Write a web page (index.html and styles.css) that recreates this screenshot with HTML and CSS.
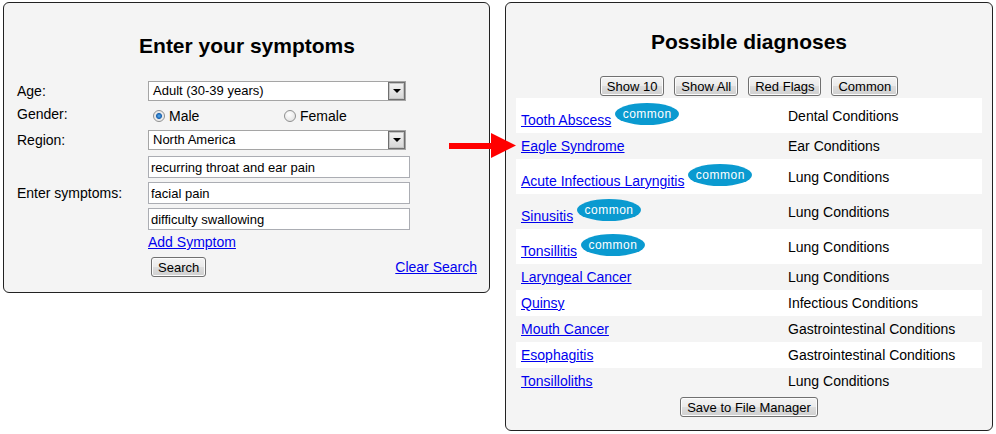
FILE: index.html
```html
<!DOCTYPE html>
<html lang="en">
<head>
    <meta charset="UTF-8">
    <title>Symptom Checker</title>
    <link rel="stylesheet" href="styles.css">
</head>
<body>

    <div class="page">

        <div class="panel symptoms">
            <h2>Enter your symptoms</h2>

            <div class="row row-age">
                <label>Age:</label>
                <div class="select"><span>Adult (30-39 years)</span><span class="drop"></span></div>
            </div>

            <div class="row row-gender">
                <label>Gender:</label>
                <div class="radios">
                    <span class="choice"><span class="radio checked"></span>Male</span>
                    <span class="choice"><span class="radio"></span>Female</span>
                </div>
            </div>

            <div class="row row-region">
                <label>Region:</label>
                <div class="select"><span>North America</span><span class="drop"></span></div>
            </div>

            <div class="row row-symptoms">
                <label>Enter symptoms:</label>
                <div class="inputs">
                    <input type="text" value="recurring throat and ear pain">
                    <input type="text" value="facial pain">
                    <input type="text" value="difficulty swallowing">
                </div>
            </div>

            <div class="row row-add">
                <label></label>
                <a href="#">Add Symptom</a>
            </div>

            <div class="row row-search">
                <label></label>
                <div class="search-line">
                    <button class="btn">Search</button>
                    <a href="#">Clear Search</a>
                </div>
            </div>
        </div>

        <div class="panel diagnoses">
            <h2>Possible diagnoses</h2>

            <div class="toolbar">
                <button class="btn">Show 10</button>
                <button class="btn">Show All</button>
                <button class="btn">Red Flags</button>
                <button class="btn">Common</button>
            </div>

            <table class="results">
                <tr class="lit">
                    <td class="name"><a href="#">Tooth Abscess</a> <span class="badge">common</span></td>
                    <td>Dental Conditions</td>
                </tr>
                <tr>
                    <td class="name"><a href="#">Eagle Syndrome</a></td>
                    <td>Ear Conditions</td>
                </tr>
                <tr class="lit">
                    <td class="name"><a href="#">Acute Infectious Laryngitis</a> <span class="badge">common</span></td>
                    <td>Lung Conditions</td>
                </tr>
                <tr>
                    <td class="name"><a href="#">Sinusitis</a> <span class="badge">common</span></td>
                    <td>Lung Conditions</td>
                </tr>
                <tr class="lit">
                    <td class="name"><a href="#">Tonsillitis</a> <span class="badge">common</span></td>
                    <td>Lung Conditions</td>
                </tr>
                <tr>
                    <td class="name"><a href="#">Laryngeal Cancer</a></td>
                    <td>Lung Conditions</td>
                </tr>
                <tr class="lit">
                    <td class="name"><a href="#">Quinsy</a></td>
                    <td>Infectious Conditions</td>
                </tr>
                <tr>
                    <td class="name"><a href="#">Mouth Cancer</a></td>
                    <td>Gastrointestinal Conditions</td>
                </tr>
                <tr class="lit">
                    <td class="name"><a href="#">Esophagitis</a></td>
                    <td>Gastrointestinal Conditions</td>
                </tr>
                <tr>
                    <td class="name"><a href="#">Tonsilloliths</a></td>
                    <td>Lung Conditions</td>
                </tr>
            </table>

            <div class="save">
                <button class="btn">Save to File Manager</button>
            </div>
        </div>

        <!-- red pointer over the gap between the panels -->
        <svg class="arrow" width="70" height="28" viewBox="0 0 70 28">
            <rect x="1" y="11" width="44" height="6" fill="#ff0000"/>
            <polygon points="43,1 68,13.5 43,26" fill="#ff0000"/>
        </svg>

    </div>

</body>
</html>
```

FILE: styles.css
```css
* {
    box-sizing: border-box;
}

body {
    font-family: "Liberation Sans", Arial, sans-serif;
    font-size: 14px;
    color: black;
    background: white;
    margin: 0;
    padding: 0;
}

a {
    color: #0000ee;
}

.page {
    position: relative;
    display: flex;
    align-items: flex-start;
    gap: 15px;
    padding: 2px 0 0 3px;
}

.panel {
    background: #f4f4f4;
    border: 1px solid #222;
    border-radius: 6px;
}

.panel h2 {
    margin: 0;
    font-size: 21px;
    line-height: 24px;
    text-align: center;
}

/* left panel */

.symptoms {
    width: 487px;
    height: 291px;
    padding: 31px 12px 0 13px;
}

.row {
    display: flex;
    align-items: center;
    line-height: 16px;
}

.row label {
    width: 131px;
    flex-shrink: 0;
}

.row-age {
    margin-top: 23px;
}

.row-gender {
    margin-top: 6px;
    height: 17px;
}

.row-gender label {
    align-self: flex-start;
    margin-top: -1px;
}

.row-region,
.row-symptoms {
    margin-top: 6px;
}

.row-add {
    margin-top: 4px;
}

.row-search {
    margin-top: 7px;
}

.select {
    width: 258px;
    height: 20px;
    border: 1px solid #a5a5a5;
    background: white;
    display: flex;
    align-items: center;
    padding-left: 4px;
    font-size: 13px;
}

.drop {
    margin-left: auto;
    width: 17px;
    height: 18px;
    border: 1px solid #6f6f6f;
    box-shadow: inset 0 0 0 1px #c4c4c4;
    background: linear-gradient(#f4f4f4, #d6d6d6);
    display: flex;
    align-items: center;
    justify-content: center;
}

.drop::after {
    content: "";
    border-left: 4px solid transparent;
    border-right: 4px solid transparent;
    border-top: 4px solid black;
}

.radios {
    display: grid;
    grid-template-columns: 131px 131px;
}

.choice {
    display: flex;
    align-items: center;
    gap: 4px;
    padding-left: 5px;
}

.radio {
    width: 12px;
    height: 12px;
    border-radius: 50%;
    border: 1px solid #8e8f8f;
    background: radial-gradient(circle at 40% 35%, #ffffff, #dcdcdc);
}

.radio.checked {
    background: radial-gradient(circle, #5ab0f0 0, #1a62b0 2.5px, #e6e6e6 3.5px, #f8f8f8 6px);
}

.inputs {
    display: flex;
    flex-direction: column;
    gap: 4px;
}

.inputs input {
    width: 262px;
    height: 22px;
    margin: 0;
    border: 1px solid #abadb3;
    padding: 0 2px;
    font-family: "Liberation Sans", Arial, sans-serif;
    font-size: 13px;
    color: black;
    background: white;
}

.search-line {
    flex: 1;
    display: flex;
    justify-content: space-between;
    align-items: center;
}

.search-line .btn {
    margin-left: 3px;
}

/* buttons */

.btn {
    font-family: "Liberation Sans", Arial, sans-serif;
    font-size: 13px;
    color: black;
    height: 20px;
    padding: 0 6px;
    margin: 0;
    border: 1px solid #707070;
    border-radius: 3px;
    background: linear-gradient(#f4f4f4 0%, #ebebeb 48%, #dddddd 52%, #cfcfcf 100%);
    box-shadow: inset 0 0 0 1px #fcfcfc;
}

/* right panel */

.diagnoses {
    width: 488px;
    height: 429px;
    padding: 27px 10px 0 10px;
}

.toolbar {
    margin-top: 22px;
    display: flex;
    justify-content: center;
    gap: 10px;
}

.results {
    width: 100%;
    margin-top: 2px;
    border-collapse: collapse;
    table-layout: fixed;
}

.results td {
    padding: 5px;
    line-height: 16px;
    vertical-align: middle;
}

.results td.name {
    width: 267px;
}

.results tr.lit {
    background: white;
}

.badge {
    display: inline-block;
    width: 64px;
    height: 22px;
    line-height: 22px;
    border-radius: 50%;
    background: #0a9ad0;
    color: white;
    font-size: 12px;
    letter-spacing: 0.5px;
    text-align: center;
    vertical-align: 7px;
}

.save {
    margin-top: 3px;
    display: flex;
    justify-content: center;
}

.arrow {
    position: absolute;
    left: 448px;
    top: 132px;
}
```
